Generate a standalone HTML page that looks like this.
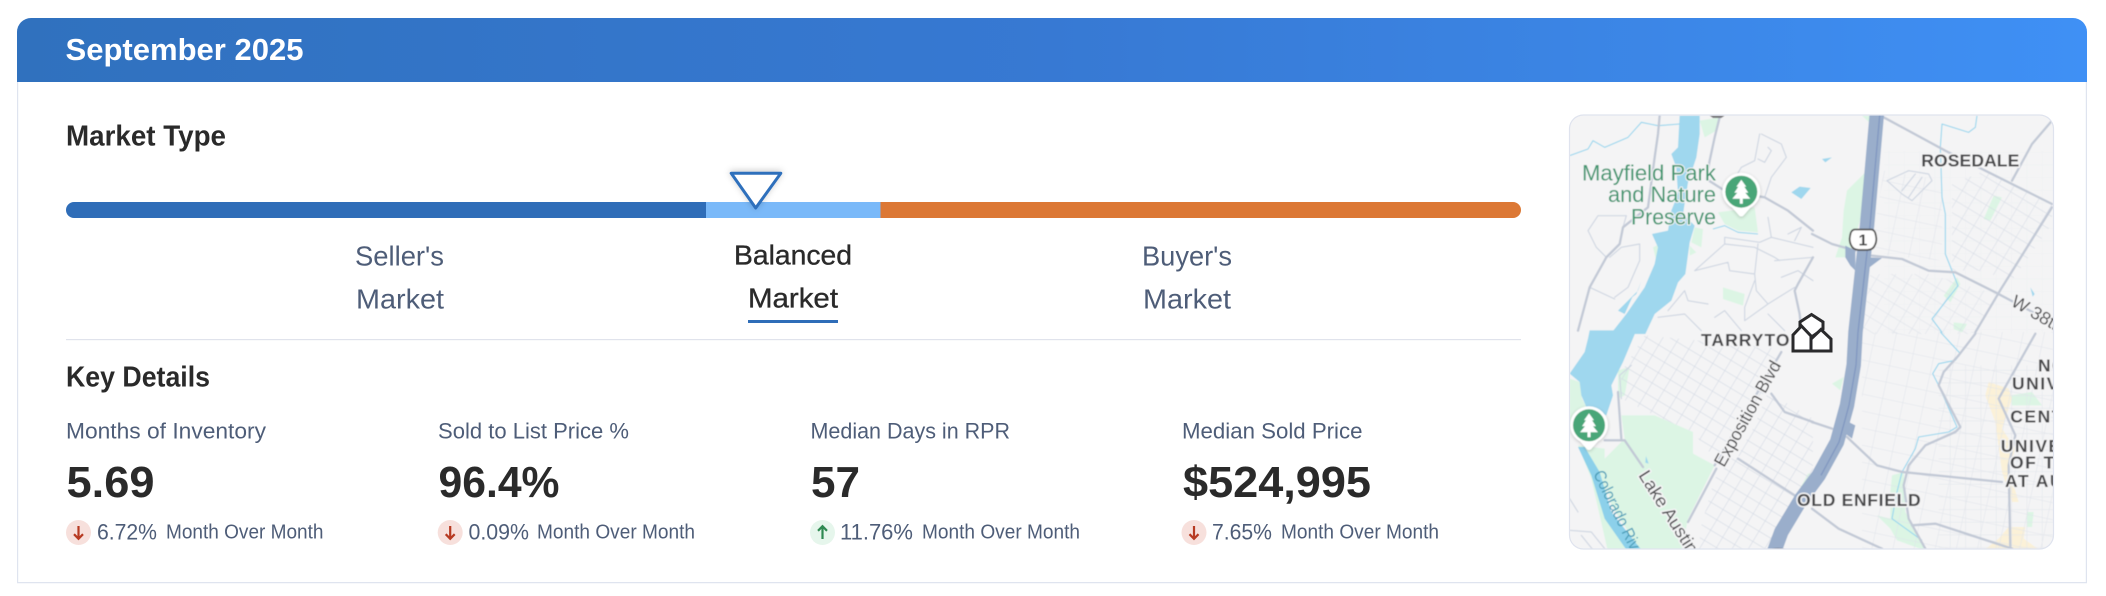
<!DOCTYPE html>
<html lang="en">
<head>
<meta charset="utf-8">
<title>September 2025 Market</title>
<style>
html,body{margin:0;padding:0;background:#fff;width:2106px;height:596px;overflow:hidden}
svg{display:block}
text{font-family:"Liberation Sans",Arial,sans-serif}
.h{font-size:29px;font-weight:700;fill:#2a2a2a}
.o{font-size:28px;fill:#4e5d78}
.b{font-size:28px;font-weight:400;fill:#2a2a2a;stroke:#2a2a2a;stroke-width:.35px}
.l{font-size:22px;fill:#4e5d78}
.v{font-size:44px;font-weight:700;fill:#2a2a2a}
.p{font-size:22.5px;fill:#4e5d78}
.m{font-size:20.5px;fill:#4e5d78}
.g{font-size:22px;fill:#3f9670;stroke:#f4f4f5;stroke-width:2px;paint-order:stroke;stroke-linejoin:round}
.n{font-size:17.5px;font-weight:700;fill:#47474a;stroke:#f4f4f5;stroke-width:3px;paint-order:stroke;stroke-linejoin:round}
.r{font-size:18px;fill:#47474a;stroke:#f4f4f5;stroke-width:3px;paint-order:stroke;stroke-linejoin:round}
.mi{fill:none;stroke:#d0d7e2;stroke-width:3.5;stroke-linejoin:round;stroke-linecap:round}
.ma{fill:none;stroke:#c2c9d6;stroke-width:7;stroke-linejoin:round;stroke-linecap:round}
.cr{fill:none;stroke:#93d5ee;stroke-width:3.2;stroke-linejoin:round}
.gr{fill:#dcf5e4}
.wa{fill:#9fd7ee}
</style>
</head>
<body>
<svg xmlns="http://www.w3.org/2000/svg" width="2106" height="596" viewBox="0 0 2106 596">
<defs>
<linearGradient id="hd" x1="0" y1="0" x2="1" y2="0">
<stop offset="0" stop-color="#3071be"/><stop offset=".5" stop-color="#3779d3"/><stop offset="1" stop-color="#3f90f5"/>
</linearGradient>
<clipPath id="mc"><rect x="1569.5" y="115" width="484" height="434" rx="14"/></clipPath>
<pattern id="p30" width="42" height="36" patternUnits="userSpaceOnUse" patternTransform="rotate(31)">
<path d="M0,0H42M0,0V36" fill="none" stroke="#d3d9e4" stroke-width="3.5"/></pattern>
<pattern id="p10" width="62" height="50" patternUnits="userSpaceOnUse" patternTransform="rotate(12)">
<path d="M0,0H62M0,0V50" fill="none" stroke="#dfe3ea" stroke-width="3"/></pattern>
<pattern id="p0" width="46" height="38" patternUnits="userSpaceOnUse">
<path d="M0,0H46M0,0V38" fill="none" stroke="#e1e5eb" stroke-width="3"/></pattern>
<filter id="bl" x="-5%" y="-5%" width="110%" height="110%"><feGaussianBlur stdDeviation=".55"/></filter>
<filter id="sh" x="-30%" y="-30%" width="160%" height="160%"><feDropShadow dx="0" dy="-1" stdDeviation="3.5" flood-color="#000" flood-opacity=".22"/></filter>
<filter id="ps" x="-30%" y="-30%" width="160%" height="160%"><feDropShadow dx="0" dy="1" stdDeviation="1.5" flood-color="#000" flood-opacity=".22"/></filter>
</defs>

<!-- card -->
<path d="M17.6,82 V582.6 H2086.4 V82" fill="#fff" stroke="#dfe4ef" stroke-width="1.2"/>
<path d="M17,82 V32 A14,14 0 0 1 31,18 H2073 A14,14 0 0 1 2087,32 V82 Z" fill="url(#hd)"/>
<text x="65.5" y="60" font-size="31" font-weight="700" fill="#fff" textLength="238" lengthAdjust="spacingAndGlyphs">September 2025</text>

<text class="h" x="66" y="145.5" textLength="160" lengthAdjust="spacingAndGlyphs">Market Type</text>

<!-- bar -->
<path d="M74,202 H706.5 V218 H74 A8,8 0 0 1 74,202 Z" fill="#2f6db8"/>
<rect x="706" y="202" width="175" height="16" fill="#7ab9f9"/>
<path d="M880.5,202 H1513 A8,8 0 0 1 1513,218 H880.5 Z" fill="#dc7835"/>
<path d="M731.2,173.2 H780.8 L755.7,208 Z" fill="#fff" stroke="#2f6fbc" stroke-width="3" stroke-linejoin="round" filter="url(#sh)"/>

<text class="o" x="355" y="265.5" textLength="89" lengthAdjust="spacingAndGlyphs">Seller's</text>
<text class="o" x="356" y="308.5" textLength="88" lengthAdjust="spacingAndGlyphs">Market</text>
<text class="b" x="734" y="264.5" textLength="118" lengthAdjust="spacingAndGlyphs">Balanced</text>
<text class="b" x="748" y="307.5" textLength="90" lengthAdjust="spacingAndGlyphs">Market</text>
<rect x="748" y="320" width="90" height="3" fill="#2f6db8"/>
<text class="o" x="1142" y="265.5" textLength="90" lengthAdjust="spacingAndGlyphs">Buyer's</text>
<text class="o" x="1143" y="308.5" textLength="88" lengthAdjust="spacingAndGlyphs">Market</text>
<rect x="66" y="339" width="1455" height="1.2" fill="#e0e3ec"/>

<text class="h" x="66" y="386.5" textLength="144" lengthAdjust="spacingAndGlyphs">Key Details</text>

<!-- stats -->
<text class="l" x="66" y="438.5" textLength="200" lengthAdjust="spacingAndGlyphs">Months of Inventory</text>
<text class="l" x="438" y="438.5" textLength="191" lengthAdjust="spacingAndGlyphs">Sold to List Price %</text>
<text class="l" x="810.5" y="438.5" textLength="199.5" lengthAdjust="spacingAndGlyphs">Median Days in RPR</text>
<text class="l" x="1182" y="438.5" textLength="180.5" lengthAdjust="spacingAndGlyphs">Median Sold Price</text>

<text class="v" x="66.5" y="497" textLength="88" lengthAdjust="spacingAndGlyphs">5.69</text>
<text class="v" x="438.5" y="497" textLength="121" lengthAdjust="spacingAndGlyphs">96.4%</text>
<text class="v" x="811" y="497" textLength="49" lengthAdjust="spacingAndGlyphs">57</text>
<text class="v" x="1183" y="497" textLength="188" lengthAdjust="spacingAndGlyphs">$524,995</text>

<circle cx="78.5" cy="532.5" r="12.5" fill="#f7e0dc"/>
<path d="M78.5,526 V538.5 M74,534.2 L78.5,538.8 L83,534.2" fill="none" stroke="#b73a22" stroke-width="2.2"/>
<text class="p" x="97" y="539.5" textLength="60" lengthAdjust="spacingAndGlyphs">6.72%</text>
<text class="m" x="166" y="538.5" textLength="157.5" lengthAdjust="spacingAndGlyphs">Month Over Month</text>

<circle cx="450.2" cy="532.5" r="12.5" fill="#f7e0dc"/>
<path d="M450.2,526 V538.5 M445.7,534.2 L450.2,538.8 L454.7,534.2" fill="none" stroke="#b73a22" stroke-width="2.2"/>
<text class="p" x="468.5" y="539.5" textLength="60.5" lengthAdjust="spacingAndGlyphs">0.09%</text>
<text class="m" x="537" y="538.5" textLength="158" lengthAdjust="spacingAndGlyphs">Month Over Month</text>

<circle cx="822.5" cy="532.5" r="12.5" fill="#e6f6ec"/>
<path d="M822.5,539 V526.5 M818,530.8 L822.5,526.2 L827,530.8" fill="none" stroke="#2f8a52" stroke-width="2.2"/>
<text class="p" x="840" y="539.5" textLength="73" lengthAdjust="spacingAndGlyphs">11.76%</text>
<text class="m" x="922" y="538.5" textLength="158" lengthAdjust="spacingAndGlyphs">Month Over Month</text>

<circle cx="1194" cy="532.5" r="12.5" fill="#f7e0dc"/>
<path d="M1194,526 V538.5 M1189.5,534.2 L1194,538.8 L1198.5,534.2" fill="none" stroke="#b73a22" stroke-width="2.2"/>
<text class="p" x="1212" y="539.5" textLength="60" lengthAdjust="spacingAndGlyphs">7.65%</text>
<text class="m" x="1281" y="538.5" textLength="158" lengthAdjust="spacingAndGlyphs">Month Over Month</text>

<!-- map -->
<g clip-path="url(#mc)">
<g filter="url(#bl)">
<rect x="1569" y="115" width="485" height="434" fill="#f4f4f5"/>

<!-- Q1 -->
<g transform="translate(1568,114) scale(.33333)">
<path class="gr" d="M395,20L455,10L445,50L410,70Z M450,295L560,280L570,355L510,350L470,330Z M465,520L530,540L525,575L465,555Z M380,340L405,345L400,400L370,385Z M365,395L385,415L365,425Z M255,400L275,390L265,440Z"/>
<path class="wa" d="M335,5L395,5L395,60L385,130L360,205L345,300L380,335L365,385L352,480L330,505L310,560L260,600L232,660L128,660L175,600L230,520L260,450L270,400L252,360L300,350L310,290L330,240L325,160L310,120L330,100Z"/>
<path class="wa" d="M670,235L695,218L728,222L700,255Z M220,500L205,540L180,560L210,530Z M150,590L195,545L170,600Z"/>
<path class="cr" d="M5,125L60,105L75,80L110,100L180,70L220,25L270,35L335,30"/>
<path class="cr" d="M435,345L470,335L510,355L570,360" stroke-width="4"/>
<path class="mi" d="M580,60L640,90L655,130L610,190L590,250M575,60L560,140L520,160L505,185M600,100L610,110L590,145L570,135M60,350L90,305L175,305L165,340M60,350L85,400L115,430M125,430L160,400L215,390L215,440L180,520L140,550M65,520L140,555M380,470L470,390L470,370L575,385L610,370L600,310M470,390L560,400L620,430L635,440M380,470L480,445L485,470L560,480L570,390M560,480L565,530L600,570L680,520M560,500L530,580L530,620L600,570M640,490L690,470L735,500M610,370L735,400M620,440L735,430M660,360L700,340M680,380L700,340M300,590L350,530L360,560L420,570M270,610L350,600L400,650M440,610L470,590L520,650M650,650L600,600"/>
<path class="ma" d="M275,5L270,60L260,130L240,280L165,340L155,390L115,430L65,520L30,650M455,10L440,70L425,140L415,195L470,230L590,250L660,290L735,350M735,430L690,510L680,530L695,600L700,650"/>
<path d="M425,5L470,5L460,12L435,12Z" fill="#77777a"/>
</g>

<!-- Q2 -->
<g transform="translate(1812,114) scale(.33333)">
<path class="gr" d="M160,175L105,230L95,290L90,370L70,430L110,430L150,300L165,175Z M545,245L570,250L535,320L515,315Z M395,545L435,490L445,510L415,565Z M425,625L465,630L450,655L425,645Z M150,5L175,5L172,25Z"/>
<rect x="215" y="110" width="520" height="550" fill="url(#p0)" opacity=".3"/>
<path d="M420,210L520,170L720,270L720,330L600,500L500,470L420,470Z" fill="url(#p30)" opacity=".85"/>
<path d="M175,480L350,480L550,540L490,660L150,660Z" fill="url(#p30)" opacity=".65"/>
<path d="M190,330L215,170L390,200L390,440L180,420Z" fill="url(#p10)"/>
<path class="mi" stroke-width="3" d="M225,200L290,170L350,180L360,200L300,260L270,240ZM270,230L310,180M290,250L330,190"/>
<path class="wa" d="M30,135L60,130L40,145Z M655,520L668,540L662,548Z"/>
<path class="cr" d="M495,5L490,40L470,55L390,30L385,100L390,250L400,300L400,420L438,515L395,570L360,615L390,655"/>
<path class="ma" stroke-width="6" d="M215,10L280,45L400,110L520,170L720,270M720,20L660,90L600,200M720,280L570,520L490,655M0,360L60,390L130,410M180,425L270,435L350,470L430,475L550,535L720,625"/>
<path d="M100,395L130,410L130,470L115,455L100,430Z M170,430L210,432L170,462L160,460Z" fill="#9aaecb"/>
</g>

<!-- Q3 -->
<g transform="translate(1568,332) scale(.33333)">
<path class="gr" d="M160,250L260,250L375,300L375,365L440,400L360,560L340,660L220,660L130,520L100,390L170,320Z M5,140L35,150L42,200L55,225L5,290Z M150,115L185,105L170,190L150,200Z M30,340L110,350L110,400L120,520L190,660L120,660L70,440Z M690,480L720,425L735,425L690,510Z"/>
<path class="wa" d="M65,-5L205,-5L165,90L130,160L135,190L115,250L55,225L40,190L35,150L5,125L50,60L60,20Z"/>
<path d="M30,345L50,345L95,420L130,540L225,660L180,660L110,560L70,430Z" fill="#8cd0ea"/>
<path d="M234,372L242,395L232,392Z" fill="#9fd7ee"/>
<path d="M160,120L230,10L640,50L600,160L520,310L440,380L375,300L260,250L160,200Z" fill="url(#p30)"/>
<path d="M400,580L440,440L500,370L690,490L640,560L600,660L390,660Z" fill="url(#p30)"/>
<path d="M600,180L735,260L735,420L680,490L510,370L560,280Z" fill="url(#p30)"/>
<path class="mi" d="M5,595L70,600L110,650M5,500L30,540M40,610L80,660M160,200L155,130L190,100"/>
<path class="ma" stroke-width="6" d="M150,180L160,320M110,325L170,325L225,405M445,410L360,570M640,60L440,400M510,380L680,490M610,185L650,240L735,270"/>
</g>

<!-- Q4 -->
<g transform="translate(1812,332) scale(.33333)">
<path class="gr" d="M240,430L275,420L280,540L320,610L338,655L255,625L235,590L195,550L235,560L235,480Z M60,155L95,135L85,175Z M595,190L660,180L690,220L600,220Z M645,540L665,540L660,585L645,585Z"/>
<path d="M530,150L590,170L600,200L570,290L610,350L590,410L620,510L600,510L570,420L550,270L520,190Z M510,660L560,620L590,585L640,585L635,620L690,660Z" fill="#fbf1d8"/>
<rect x="150" y="0" width="580" height="660" fill="url(#p10)"/>
<rect x="380" y="100" width="350" height="560" fill="url(#p0)"/>
<path class="cr" d="M385,0L445,65L430,85L380,95L362,125L380,160L435,285L410,300L320,315L310,350L270,420L255,480L240,560L330,625"/>
<path class="ma" stroke-width="6" d="M105,315L195,400L270,420L570,450M395,120L440,70L490,5M395,120L380,160L445,285L430,300L340,340L290,400L275,460L290,560L340,650M300,580L370,575L600,650M0,270L60,290M0,530L80,590L210,650M560,200L610,310L590,400L595,650M560,200L670,5"/>
<path d="M110,270L130,280L120,320L100,305Z" fill="#9aaecb"/>
</g>

<!-- highway -->
<path d="M1877,112 L1867,225.7 L1855.5,332 L1853.7,365 L1847,405.3 L1837,442 L1818.7,475.3 L1801.3,498.7 L1781.3,532 L1774,552" fill="none" stroke="#9aaecb" stroke-width="14.5" stroke-linejoin="round"/>
<path d="M1880,112 L1870,225.7 L1858,332 L1856,365 L1849,405.3 L1839,442 L1821,475.3" fill="none" stroke="#7f95bf" stroke-width="1.2"/>

<!-- labels -->
<text class="g" x="1582" y="180.7" textLength="134" lengthAdjust="spacingAndGlyphs">Mayfield Park</text>
<text class="g" x="1608" y="202" textLength="108" lengthAdjust="spacingAndGlyphs">and Nature</text>
<text class="g" x="1631" y="224.5" textLength="85" lengthAdjust="spacingAndGlyphs">Preserve</text>
<text class="n" x="1921.3" y="166.7" textLength="98" lengthAdjust="spacing">ROSEDALE</text>
<text class="n" x="1701" y="346" textLength="88.5" lengthAdjust="spacing">TARRYTO</text>
<text class="n" x="1797" y="506" textLength="123.6" lengthAdjust="spacing">OLD ENFIELD</text>
<text class="n" x="2038" y="371.3" letter-spacing="1.5">NO</text>
<text class="n" x="2012" y="389.3" letter-spacing="1.5">UNIV</text>
<text class="n" x="2010.3" y="422.7" letter-spacing="1.5">CENT</text>
<text class="n" x="2000.7" y="452" letter-spacing="1.5">UNIVE</text>
<text class="n" x="2010" y="468.7" letter-spacing="1.5">OF T</text>
<text class="n" x="2005" y="487" letter-spacing="1.5">AT AU</text>
<text class="r" transform="translate(2010,305) rotate(30)">W 38th</text>
<text class="r" transform="translate(1724,468) rotate(-60.8)" textLength="118" lengthAdjust="spacingAndGlyphs">Exposition Blvd</text>
<text class="r" transform="translate(1638,475.3) rotate(57.5)" textLength="95" lengthAdjust="spacingAndGlyphs">Lake Austin</text>
<text transform="translate(1593,473.7) rotate(64)" font-size="17" fill="#4a9db8" textLength="86" lengthAdjust="spacingAndGlyphs">Colorado Riv</text>

<!-- shield -->
<path d="M1855,229.5 H1871 Q1875,229.5 1876,236 Q1877,241 1875,245 Q1873,250 1867,250 H1859 Q1853,250 1851,245 Q1849,241 1850,236 Q1851,229.5 1855,229.5 Z" fill="#fff" stroke="#555" stroke-width="1.8"/>
<text x="1863" y="245.5" font-size="16" font-weight="700" fill="#444" text-anchor="middle">1</text>
<path d="M1768,552 Q1770,548 1778,548 Q1786,548 1788,552 Z" fill="#77777a"/>

<!-- pins -->
<g transform="translate(1741.3,191.7)" filter="url(#ps)">
<path d="M-19,0 A19,19 0 0 1 19,0 A19,19 0 0 1 9,16 L2,24 Q0,25.5 -2,24 L-9,16 A19,19 0 0 1 -19,0 Z" fill="#fff"/>
<circle r="16" fill="#4aa678"/>
<path d="M0,-12 L5,-5 L3,-5 L7,1 L4,1 L9,7 L1.5,7 L1.5,12 L-1.5,12 L-1.5,7 L-9,7 L-4,1 L-7,1 L-3,-5 L-5,-5 Z" fill="#fff"/>
</g>
<g transform="translate(1589,425.3)" filter="url(#ps)">
<path d="M-19,0 A19,19 0 0 1 19,0 A19,19 0 0 1 9,16 L2,24 Q0,25.5 -2,24 L-9,16 A19,19 0 0 1 -19,0 Z" fill="#fff"/>
<circle r="16" fill="#4aa678"/>
<path d="M0,-12 L5,-5 L3,-5 L7,1 L4,1 L9,7 L1.5,7 L1.5,12 L-1.5,12 L-1.5,7 L-9,7 L-4,1 L-7,1 L-3,-5 L-5,-5 Z" fill="#fff"/>
</g>
</g>

<!-- home marker -->
<g fill="#fff" stroke="#2a2a2c" stroke-width="3" stroke-linejoin="miter">
<path d="M1811.5,314.5 L1823,322 L1823,329 L1811.5,337 L1800,329 L1800,322 Z"/>
<path d="M1793,351 V335 L1801.5,326 L1811,336 V351 Z"/>
<path d="M1811,351 V339 L1821,329.5 L1831,339 V351 Z"/>
</g>
</g>
<rect x="1569.5" y="115" width="484" height="434" rx="14" fill="none" stroke="#dfe3ee" stroke-width="1.2"/>
</svg>
</body>
</html>
